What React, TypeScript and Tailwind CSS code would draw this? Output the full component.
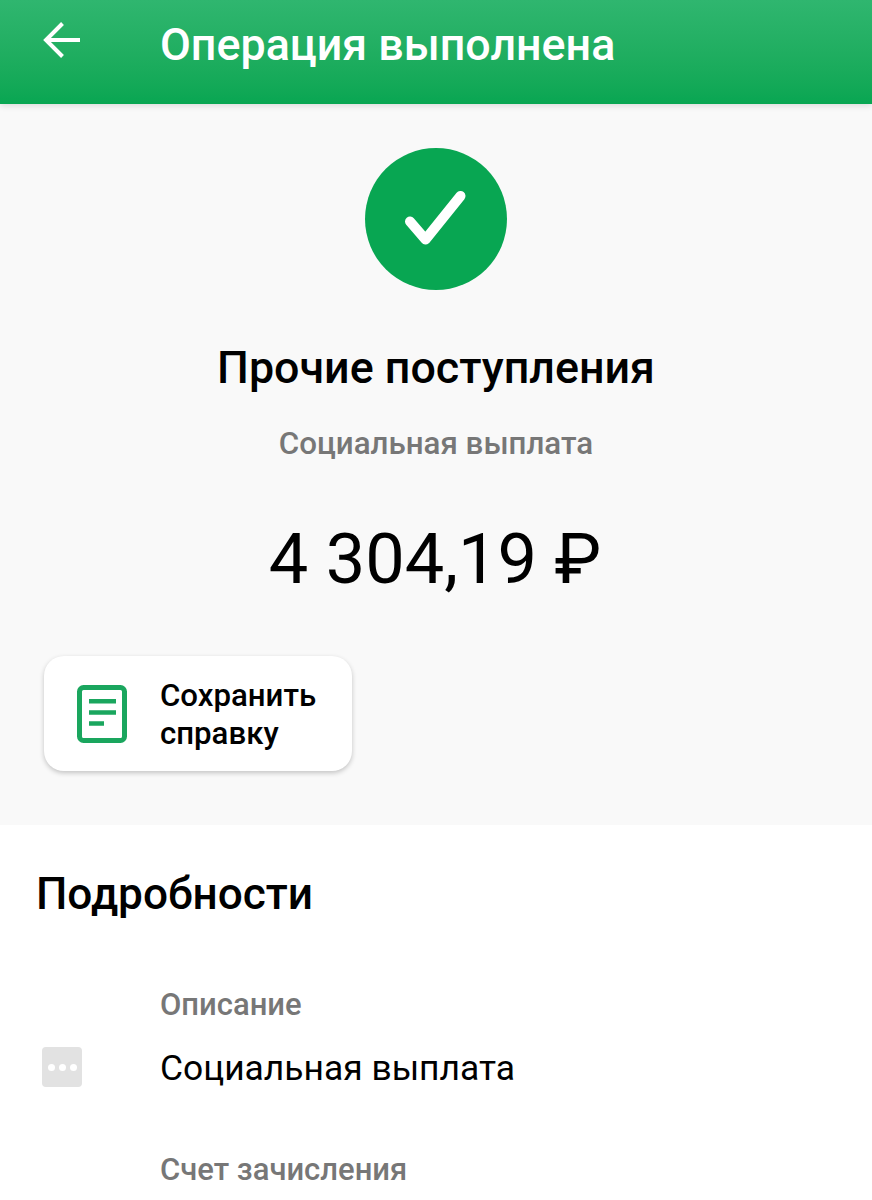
export default function App() {
  return (
    <div className="w-[872px] h-[1200px] overflow-hidden bg-white font-['Roboto',sans-serif] flex flex-col">
      <header className="relative z-10 h-[104px] shrink-0 bg-gradient-to-b from-[#2fb66f] to-[#08a652] shadow-[0_2px_6px_rgba(0,0,0,0.12)] flex items-start pt-[17px]">
        <svg className="ml-[43px] mt-[5px] w-[38px] h-[36px]" viewBox="0 0 38 36" fill="none" stroke="white" strokeWidth="4">
          <path d="M37 18H3M19.5 1.5L3 18l16.5 16.5" />
        </svg>
        <h1 className="ml-[79px] text-[44.8px] leading-[56px] font-medium text-white">Операция выполнена</h1>
      </header>
      <section className="h-[721px] shrink-0 bg-[#f9f9f9] flex flex-col items-center pt-[44px]">
        <div className="w-[142px] h-[142px] rounded-full bg-[#08a652] flex items-center justify-center">
          <svg className="w-[64px] h-[56px]" viewBox="0 0 64 56" fill="none" stroke="white" strokeWidth="10" strokeLinecap="round" strokeLinejoin="round">
            <path d="M6 30.5L21.5 48.5L56.5 5" />
          </svg>
        </div>
        <h2 className="mt-[50px] text-[44.8px] leading-[56px] font-medium text-black">Прочие поступления</h2>
        <p className="mt-[28px] text-[31.3px] leading-[40px] font-medium text-[#777777]">Социальная выплата</p>
        <p className="mt-[55px] text-[70.3px] leading-[80px] text-black -translate-x-px">4 304,19 ₽</p>
        <div className="mt-[57px] self-start ml-[44px] w-[308px] h-[115px] rounded-[20px] bg-white shadow-[0_2px_5px_rgba(0,0,0,0.22)] flex items-center">
          <svg className="ml-[33px] w-[50px] h-[58px]" viewBox="0 0 50 58" fill="none">
            <rect x="2.5" y="2.5" width="45" height="53" rx="4" stroke="#1aa65e" strokeWidth="5" />
            <path d="M12 16.3H39M12 27.5H39M12 38.5H27" stroke="#1aa65e" strokeWidth="4.5" />
          </svg>
          <span className="ml-[33px] mt-[2px] text-[31.2px] leading-[38px] font-medium text-black">Сохранить<br />справку</span>
        </div>
      </section>
      <section className="flex-1 bg-white pl-[36px]">
        <h2 className="mt-[41px] text-[44.2px] leading-[56px] font-medium text-black">Подробности</h2>
        <div className="mt-[63px] pl-[124px] relative">
          <p className="text-[31px] leading-[40px] font-medium text-[#777777]">Описание</p>
          <div className="absolute left-[6px] top-[62px] w-[40px] h-[40px] rounded-[4px] bg-[#e2e2e2] flex items-center justify-center gap-[4px]">
            <span className="w-[7px] h-[7px] rounded-full bg-white" />
            <span className="w-[7px] h-[7px] rounded-full bg-white" />
            <span className="w-[7px] h-[7px] rounded-full bg-white" />
          </div>
          <p className="mt-[19px] text-[35.4px] leading-[48px] text-black">Социальная выплата</p>
          <p className="mt-[58px] text-[31px] leading-[40px] font-medium text-[#777777]">Счет зачисления</p>
        </div>
      </section>
    </div>
  );
}
